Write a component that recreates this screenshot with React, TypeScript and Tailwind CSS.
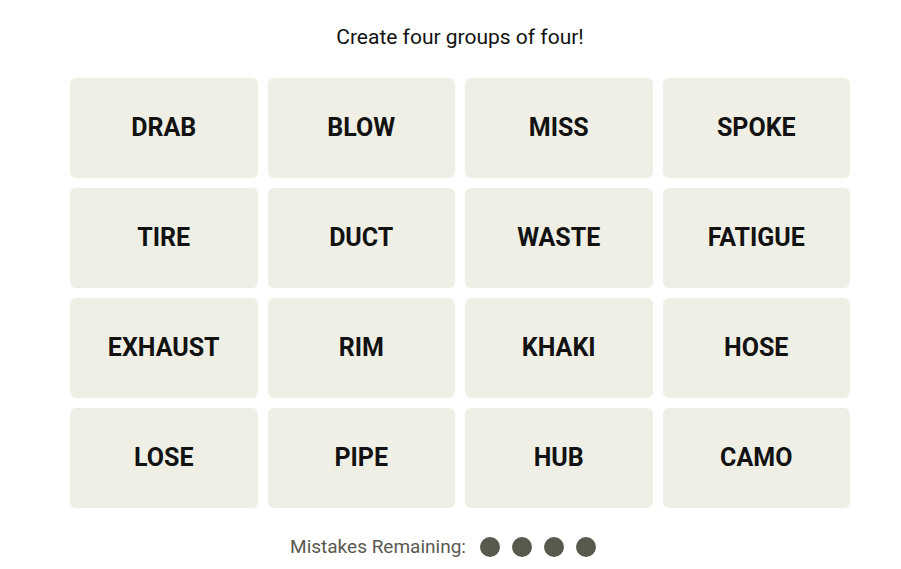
const words = [
  "DRAB", "BLOW", "MISS", "SPOKE",
  "TIRE", "DUCT", "WASTE", "FATIGUE",
  "EXHAUST", "RIM", "KHAKI", "HOSE",
  "LOSE", "PIPE", "HUB", "CAMO",
];

export default function App() {
  return (
    <div className="min-h-screen bg-white" style={{ fontFamily: "Roboto, 'Liberation Sans', sans-serif" }}>
      <div className="ml-[70px] w-[780px] pt-[23px]">
        <p className="text-center text-[21px] leading-[28px] text-[#121212]">
          Create four groups of four!
        </p>
        <div className="mt-[27px] grid grid-cols-4 gap-[10px]">
          {words.map((w) => (
            <button
              key={w}
              className="flex h-[100px] items-center justify-center rounded-[6px] bg-[#efefe6] text-[25px] font-bold uppercase text-[#121212]"
            >
              {w}
            </button>
          ))}
        </div>
        <div className="mt-[27px] flex h-[24px] items-center justify-center pr-[34px]">
          <span className="text-[19px] text-[#5a594e]">Mistakes Remaining:</span>
          <div className="ml-[14px] flex gap-[12px]">
            {[0, 1, 2, 3].map((i) => (
              <span key={i} className="h-[20px] w-[20px] rounded-full bg-[#5a594e]" />
            ))}
          </div>
        </div>
      </div>
    </div>
  );
}
